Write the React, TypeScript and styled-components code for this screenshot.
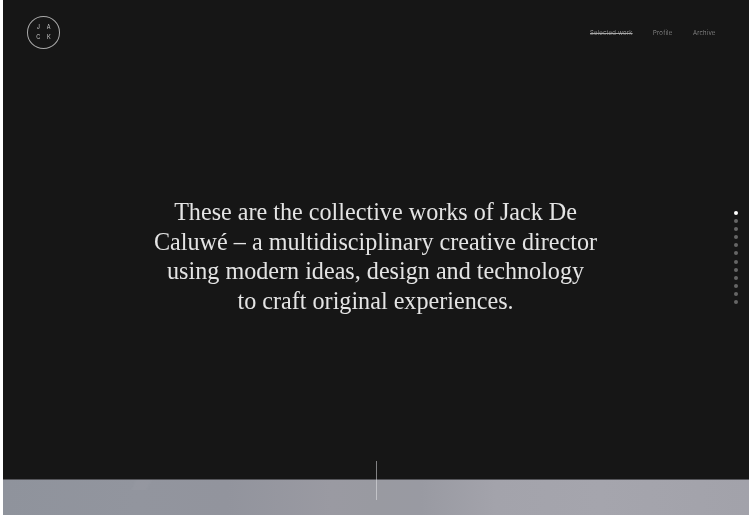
import React from 'react'
import styled, { createGlobalStyle } from 'styled-components'

const GlobalStyle = createGlobalStyle`
  html, body {
    margin: 0;
    padding: 0;
    background: #fff;
  }
`

const Page = styled.div`
  position: relative;
  display: flex;
  flex-direction: column;
  width: 746px;
  height: 515px;
  margin: 0 3px;
  overflow: hidden;
  background: #161616;
`

const Header = styled.header`
  display: flex;
  align-items: flex-start;
  justify-content: space-between;
  padding: 16px 33px 0 24px;
`

const Logo = styled.div`
  display: grid;
  grid-template-columns: 10.5px 10.5px;
  grid-auto-rows: 10px;
  place-items: center;
  place-content: center;
  box-sizing: border-box;
  width: 33px;
  height: 32.5px;
  border: 1px solid #a9a9a9;
  border-radius: 50%;
  color: #cfcfcf;
  font: 400 5.5px/10px 'Inter', sans-serif;
  will-change: transform;
`

const Nav = styled.nav`
  display: flex;
  gap: 20.5px;
  padding-top: 12px;
  font: 300 6px/9px 'Inter', sans-serif;
  letter-spacing: 0.22px;
  will-change: transform;
`

const NavLink = styled.a<{ $active?: boolean }>`
  color: ${props => (props.$active ? '#a8a8a8' : '#9a9a9a')};
  text-decoration: ${props => (props.$active ? 'line-through' : 'none')};
`

const Hero = styled.main`
  display: flex;
  flex: 1;
  align-items: center;
  justify-content: center;
  padding-bottom: 16px;
`

const Intro = styled.h1`
  margin: 0;
  color: #e4e4e4;
  font: 400 24.15px/29.5px 'Liberation Serif', serif;
  text-align: center;
  will-change: transform;
`

const Strip = styled.div`
  flex: none;
  height: 36px;
  box-sizing: border-box;
  border-top: 1px solid #55555a;
  background:
    linear-gradient(115deg, transparent 17.5%, rgba(255, 255, 255, 0.025) 18%, rgba(255, 255, 255, 0.025) 19.5%, transparent 20%) top / 100% 10px no-repeat,
    linear-gradient(
      90deg,
      #8f939c 0%,
      #92959e 18%,
      #92949d 30%,
      #9a9aa2 44%,
      #999aa1 50%,
      #999aa2 56%,
      #a3a3ab 66%,
      #a5a5ad 80%,
      #a2a2aa 100%
    );
`

const Dots = styled.ul`
  position: absolute;
  top: 211px;
  right: 11px;
  display: flex;
  flex-direction: column;
  gap: 4.1px;
  margin: 0;
  padding: 0;
  list-style: none;
`

const Dot = styled.li<{ $active?: boolean }>`
  width: 4px;
  height: 4px;
  border-radius: 50%;
  background: ${props => (props.$active ? '#ffffff' : '#666666')};
`

const ScrollLine = styled.div`
  position: absolute;
  top: 461px;
  left: 372.5px;
  width: 1.5px;
  height: 39px;
  background: rgba(235, 235, 240, 0.5);
`

export default function App() {
  return (
    <>
      <GlobalStyle />
      <Page>
        <Header>
          <Logo>
            <span>J</span>
            <span>A</span>
            <span>C</span>
            <span>K</span>
          </Logo>
          <Nav>
            <NavLink $active>Selected work</NavLink>
            <NavLink>Profile</NavLink>
            <NavLink>Archive</NavLink>
          </Nav>
        </Header>
        <Hero>
          <Intro>
            These are the collective works of Jack De
            <br />
            Caluwé – a multidisciplinary creative director
            <br />
            using modern ideas, design and technology
            <br />
            to craft original experiences.
          </Intro>
        </Hero>
        <Strip />
        <Dots>
          {Array.from({ length: 12 }).map((_, index) => (
            <Dot key={index} $active={index === 0} />
          ))}
        </Dots>
        <ScrollLine />
      </Page>
    </>
  )
}
